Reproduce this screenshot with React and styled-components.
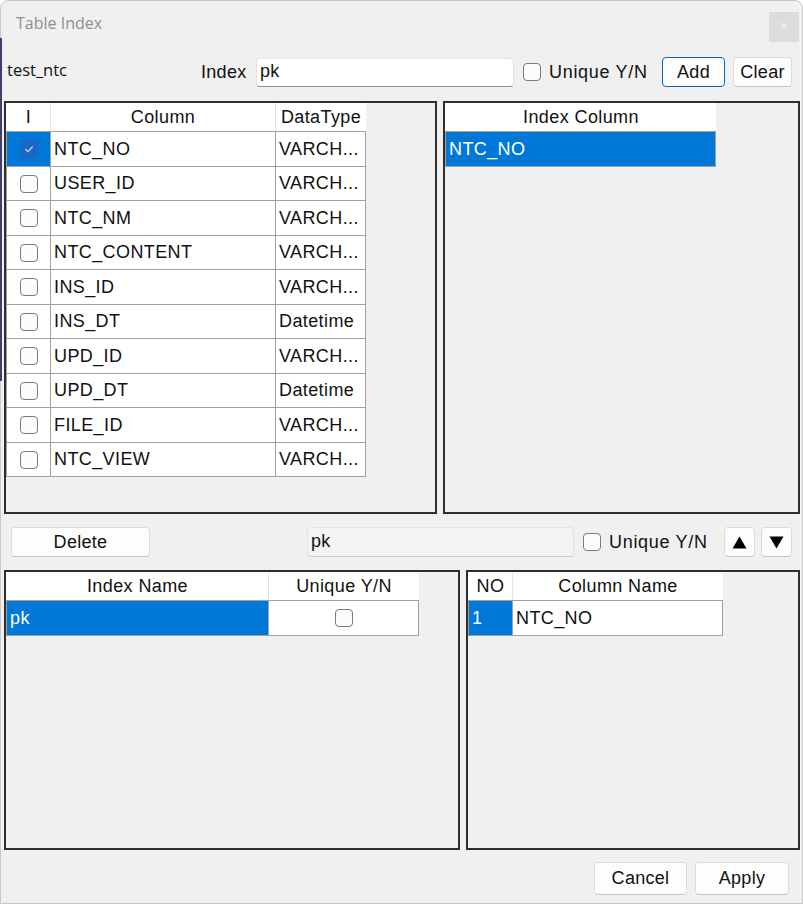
import React from "react";
import styled, { createGlobalStyle } from "styled-components";

const GlobalStyle = createGlobalStyle`
  html, body { margin: 0; padding: 0; background: #ffffff; }
  * { box-sizing: border-box; }
  body { font-family: "Liberation Sans", Arial, sans-serif; }
`;

const UI_FONT = `"Liberation Sans", Arial, sans-serif`;
const TITLE_FONT = `"Open Sans", "Noto Sans", sans-serif`;

const Window = styled.div`
  position: relative;
  width: 803px;
  height: 904px;
  background: #f0f0f0;
  border: 1px solid #c9c9c9;
  border-radius: 8px 8px 0 0;
  display: flex;
  flex-direction: column;
  font-family: ${UI_FONT};
  color: #111;
`;

const EdgeStrip = styled.div`
  position: absolute;
  left: -1px;
  top: 37px;
  width: 2px;
  height: 343px;
  background: #3d3f6e;
`;

const TitleBar = styled.div`
  height: 56px;
  display: flex;
  align-items: flex-start;
  justify-content: space-between;
  padding: 10px 3px 0 15px;
`;

const Title = styled.div`
  font-family: ${TITLE_FONT};
  font-size: 16px;
  line-height: 24px;
  color: #8f8f8f;
`;

const CloseBtn = styled.div`
  width: 30px;
  height: 30px;
  margin-top: 1px;
  background: #dcdcdc;
  color: #f4f4f4;
  font-family: ${TITLE_FONT};
  font-size: 16px;
  line-height: 28px;
  text-align: center;
`;

const ToolRow = styled.div`
  height: 30px;
  display: flex;
  align-items: center;
  padding-left: ${(p) => p.$pad}px;
  margin-top: ${(p) => p.$top || 0}px;
`;

const TableName = styled.div`
  width: 194px;
  font-family: ${TITLE_FONT};
  font-size: 16.5px;
  line-height: 20px;
  margin-top: -4px;
`;

const FieldLabel = styled.div`
  width: ${(p) => p.$w}px;
  font-size: 18px;
  letter-spacing: 0.3px;
  line-height: 22px;
`;

const TextField = styled.div`
  width: ${(p) => p.$w}px;
  height: ${(p) => p.$h}px;
  margin-left: ${(p) => p.$ml || 0}px;
  background: ${(p) => (p.$disabled ? "#f3f3f3" : "#ffffff")};
  border: 1px solid #e3e3e3;
  border-bottom-color: ${(p) => (p.$disabled ? "#cfcfcf" : "#8c8c8c")};
  border-radius: 4px;
  padding-left: 3px;
  font-size: 18px;
  letter-spacing: 0.3px;
  line-height: ${(p) => p.$h - 4}px;
`;

const CheckBox = styled.span`
  display: inline-flex;
  align-items: center;
  justify-content: center;
  width: 18px;
  height: 18px;
  flex: 0 0 18px;
  border-radius: 4px;
  border: ${(p) => (p.$checked ? "none" : "1.5px solid #7b7b7b")};
  background: ${(p) => (p.$checked ? "#1868c6" : "#fbfbfb")};
`;

const CheckGroup = styled.div`
  display: flex;
  align-items: center;
  gap: 8px;
  margin-left: ${(p) => p.$ml}px;
  width: ${(p) => p.$w}px;
  font-size: 18px;
  letter-spacing: 0.7px;
  line-height: 22px;
`;

const Button = styled.button`
  width: ${(p) => p.$w}px;
  height: ${(p) => p.$h || 30}px;
  margin-left: ${(p) => p.$ml || 0}px;
  padding: 0;
  background: #fdfdfd;
  border: 1px solid ${(p) => (p.$primary ? "#0067c0" : "#dcdcdc")};
  border-bottom-color: ${(p) => (p.$primary ? "#0067c0" : "#c4c4c4")};
  border-radius: 4px;
  font-family: ${UI_FONT};
  font-size: 18px;
  letter-spacing: 0.3px;
  color: #111;
  display: flex;
  align-items: center;
  justify-content: center;
`;

const PanelRow = styled.div`
  display: flex;
  gap: 6px;
  padding-left: 3px;
  margin-top: ${(p) => p.$top}px;
  height: ${(p) => p.$h}px;
`;

const Panel = styled.div`
  width: ${(p) => p.$w}px;
  height: 100%;
  border: 2px solid #2e2e2e;
  background: #f0f0f0;
  overflow: hidden;
`;

const Footer = styled.div`
  display: flex;
  justify-content: flex-end;
  gap: 8px;
  padding-right: 13px;
  margin-top: 12px;
`;

const HeaderGrid = styled.div`
  display: grid;
  grid-template-columns: ${(p) => p.$cols};
  padding-left: 1px;
  width: max-content;
  background: #ffffff;
`;

const HeaderCell = styled.div`
  height: 28px;
  text-align: center;
  font-size: 18px;
  letter-spacing: 0.4px;
  line-height: 28px;
  white-space: nowrap;
  overflow: hidden;
  border-right: 1px solid #e4e4e4;
  &:last-child { border-right: none; }
`;

const BodyGrid = styled.div`
  display: grid;
  grid-template-columns: ${(p) => p.$cols};
  grid-auto-rows: 34.5px;
  width: max-content;
  border-top: 1px solid #a0a0a0;
  border-left: 1px solid #a0a0a0;
`;

const Cell = styled.div`
  display: flex;
  align-items: center;
  justify-content: ${(p) => (p.$center ? "center" : "flex-start")};
  padding-left: ${(p) => (p.$center ? 0 : 3)}px;
  padding-top: 1px;
  background: ${(p) => (p.$selected ? "#0078d7" : "#ffffff")};
  color: ${(p) => (p.$selected ? "#ffffff" : "#111111")};
  border-right: 1px solid #a0a0a0;
  border-bottom: 1px solid #a0a0a0;
  font-size: 18px;
  letter-spacing: 0.4px;
  white-space: nowrap;
  overflow: hidden;
`;

const Check = ({ checked }) => (
  <CheckBox $checked={checked}>
    {checked && (
      <svg width="12" height="12" viewBox="0 0 12 12">
        <path d="M2.5 6.2 L5 8.6 L9.6 3.6" fill="none" stroke="#cfe3fb" strokeWidth="1.2" />
      </svg>
    )}
  </CheckBox>
);

const Arrow = ({ up }) => (
  <svg width="15" height="13" viewBox="0 0 15 13">
    <path d={up ? "M7.5 0.5 L14.5 12.5 L0.5 12.5 Z" : "M0.5 0.5 L14.5 0.5 L7.5 12.5 Z"} fill="#000" />
  </svg>
);

const DataGrid = ({ cols, headers, rows }) => {
  const template = cols.map((c) => `${c}px`).join(" ");
  return (
    <div>
      <HeaderGrid $cols={template}>
        {headers.map((h, i) => (
          <HeaderCell key={i}>{h}</HeaderCell>
        ))}
      </HeaderGrid>
      <BodyGrid $cols={template}>
        {rows.map((r, ri) =>
          r.map((c, ci) => (
            <Cell key={`${ri}-${ci}`} $selected={c.sel} $center={c.check !== undefined}>
              {c.check !== undefined ? <Check checked={c.check} /> : c.text}
            </Cell>
          ))
        )}
      </BodyGrid>
    </div>
  );
};

const columns = [
  ["NTC_NO", "VARCH..."],
  ["USER_ID", "VARCH..."],
  ["NTC_NM", "VARCH..."],
  ["NTC_CONTENT", "VARCH..."],
  ["INS_ID", "VARCH..."],
  ["INS_DT", "Datetime"],
  ["UPD_ID", "VARCH..."],
  ["UPD_DT", "Datetime"],
  ["FILE_ID", "VARCH..."],
  ["NTC_VIEW", "VARCH..."],
];

export default function App() {
  const colRows = columns.map(([name, type], i) => [
    { check: i === 0, sel: i === 0 },
    { text: name },
    { text: type },
  ]);

  return (
    <>
      <GlobalStyle />
      <Window>
        <EdgeStrip />
        <TitleBar>
          <Title>Table Index</Title>
          <CloseBtn>×</CloseBtn>
        </TitleBar>

        <ToolRow $pad={6}>
          <TableName>test_ntc</TableName>
          <FieldLabel $w={46}>Index</FieldLabel>
          <TextField $w={258} $h={29} $ml={9}>pk</TextField>
          <CheckGroup $ml={9} $w={139}>
            <Check checked={false} />
            Unique Y/N
          </CheckGroup>
          <Button $primary $w={63}>Add</Button>
          <Button $w={59} $ml={8}>Clear</Button>
        </ToolRow>

        <PanelRow $top={14} $h={413}>
          <Panel $w={433}>
            <DataGrid cols={[44, 225, 90]} headers={["I", "Column", "DataType"]} rows={colRows} />
          </Panel>
          <Panel $w={357}>
            <DataGrid cols={[270]} headers={["Index Column"]} rows={[[{ text: "NTC_NO", sel: true }]]} />
          </Panel>
        </PanelRow>

        <ToolRow $pad={10} $top={13}>
          <Button $w={139}>Delete</Button>
          <TextField $w={267} $h={30} $ml={157} $disabled>pk</TextField>
          <CheckGroup $ml={9} $w={141}>
            <Check checked={false} />
            Unique Y/N
          </CheckGroup>
          <Button $w={31}><Arrow up /></Button>
          <Button $w={31} $ml={6}><Arrow /></Button>
        </ToolRow>

        <PanelRow $top={13} $h={280}>
          <Panel $w={456}>
            <DataGrid
              cols={[262, 150]}
              headers={["Index Name", "Unique Y/N"]}
              rows={[[{ text: "pk", sel: true }, { check: false }]]}
            />
          </Panel>
          <Panel $w={334}>
            <DataGrid
              cols={[44, 210]}
              headers={["NO", "Column Name"]}
              rows={[[{ text: "1", sel: true }, { text: "NTC_NO" }]]}
            />
          </Panel>
        </PanelRow>

        <Footer>
          <Button $w={93} $h={33}>Cancel</Button>
          <Button $w={94} $h={33}>Apply</Button>
        </Footer>
      </Window>
    </>
  );
}
